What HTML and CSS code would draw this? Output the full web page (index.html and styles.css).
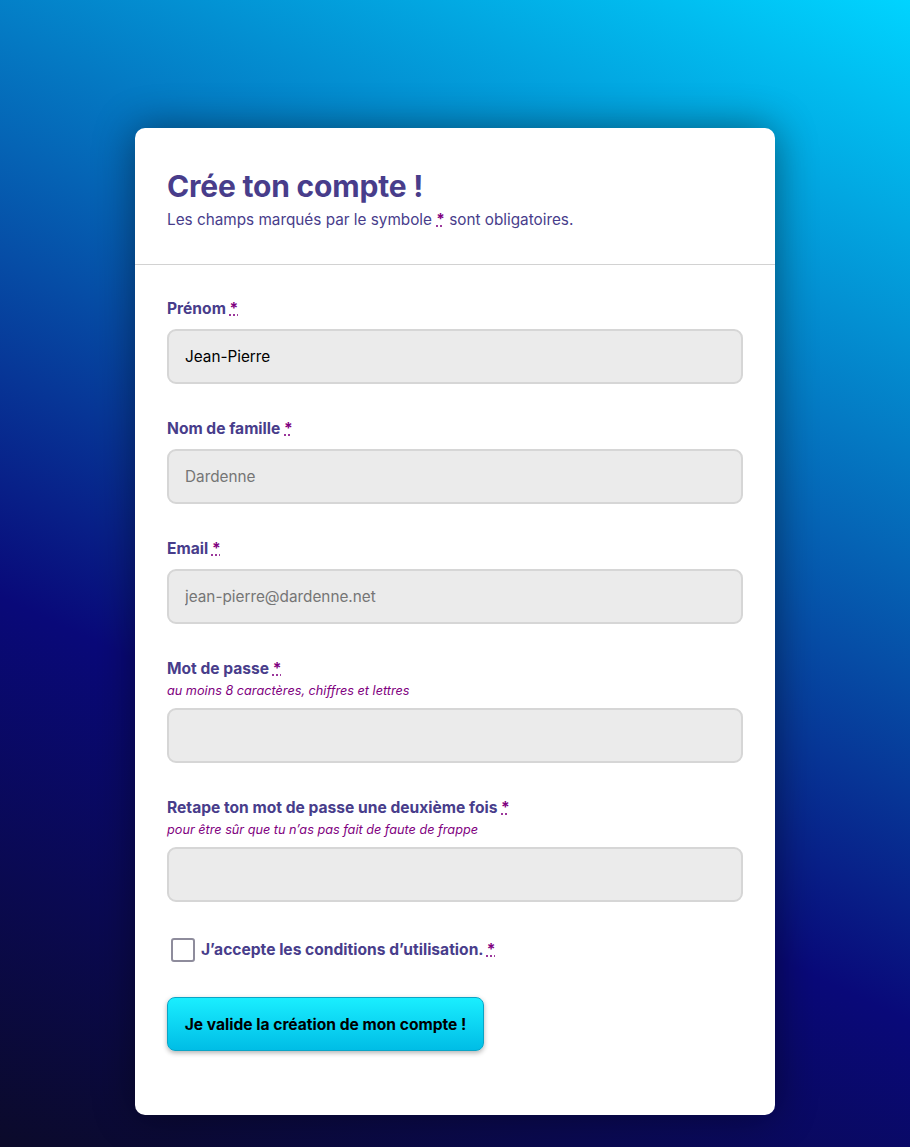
FILE: index.html
```html
<!DOCTYPE html>
<html lang="fr">
<head>
<meta charset="utf-8">
<title>Crée ton compte !</title>
<link rel="stylesheet" href="styles.css">
</head>
<body>
<main class="card">
  <header class="card-header">
    <h1 class="title">Crée ton compte !</h1>
    <p class="subtitle">Les champs marqués par le symbole <abbr class="req" title="obligatoire">*</abbr> sont obligatoires.</p>
  </header>
  <form class="card-body">
    <div class="field">
      <label class="label" for="prenom">Prénom <abbr class="req" title="obligatoire">*</abbr></label>
      <input class="input" id="prenom" type="text" value="Jean-Pierre">
    </div>
    <div class="field">
      <label class="label" for="nom">Nom de famille <abbr class="req" title="obligatoire">*</abbr></label>
      <input class="input" id="nom" type="text" placeholder="Dardenne">
    </div>
    <div class="field">
      <label class="label" for="email">Email <abbr class="req" title="obligatoire">*</abbr></label>
      <input class="input" id="email" type="email" placeholder="jean-pierre@dardenne.net">
    </div>
    <div class="field">
      <label class="label" for="mdp">Mot de passe <abbr class="req" title="obligatoire">*</abbr></label>
      <span class="hint">au moins 8 caractères, chiffres et lettres</span>
      <input class="input" id="mdp" type="password">
    </div>
    <div class="field">
      <label class="label" for="mdp2">Retape ton mot de passe une deuxième fois <abbr class="req" title="obligatoire">*</abbr></label>
      <span class="hint">pour être sûr que tu n’as pas fait de faute de frappe</span>
      <input class="input" id="mdp2" type="password">
    </div>
    <div class="check-row">
      <input class="checkbox" id="cgu" type="checkbox">
      <label class="label check-label" for="cgu">J’accepte les conditions d’utilisation. <abbr class="req" title="obligatoire">*</abbr></label>
    </div>
    <button class="submit" type="submit">Je valide la création de mon compte !</button>
  </form>
</main>
</body>
</html>
```

FILE: styles.css
```css
html {
  height: 100%;
  background: linear-gradient(25deg, #0b0a2a 0%, #090979 35%, #00d4ff 100%);
}

body {
  margin: 0;
  min-height: 100%;
  padding: 128px 0 32px;
  box-sizing: border-box;
  font-family: Inter, "Noto Sans", "Liberation Sans", sans-serif;
  color: #483d8b;
}

.card {
  width: 640px;
  margin: 0 auto;
  background: #fff;
  border-radius: 10px;
  box-shadow: 0 0 40px rgba(0, 0, 0, 0.45);
}

.card-header {
  padding: 40px 32px 32px;
  border-bottom: 1px solid #d2d2d2;
}

.title {
  margin: 0 0 4px;
  font-size: 30px;
  line-height: 36px;
  font-weight: 700;
  letter-spacing: -0.2px;
}

.subtitle {
  margin: 0;
  font-size: 15.3px;
  line-height: 24px;
}

.req {
  color: #800080;
  font-weight: 700;
  text-decoration: underline dotted;
  cursor: help;
}

.card-body {
  padding: 32px 32px 64px;
  display: flex;
  flex-direction: column;
}

.field {
  display: flex;
  flex-direction: column;
  margin-bottom: 33px;
}

.label {
  font-size: 15.6px;
  line-height: 24px;
  font-weight: 700;
  margin-bottom: 8px;
}

.hint {
  font-size: 12.7px;
  line-height: 19px;
  font-style: italic;
  color: #800080;
  margin-top: -8px;
  margin-bottom: 8px;
}

.input {
  box-sizing: border-box;
  width: 100%;
  height: 55px;
  padding: 0 16px;
  border: 2px solid #d6d6d6;
  border-radius: 9px;
  background: #ebebeb;
  font-family: Inter, "Noto Sans", "Liberation Sans", sans-serif;
  font-size: 15.3px;
  color: #000;
  outline: none;
}

.input::placeholder {
  color: #757575;
}

.check-row {
  display: flex;
  align-items: center;
  margin-top: 3px;
  margin-bottom: 35px;
}

.checkbox {
  appearance: none;
  -webkit-appearance: none;
  box-sizing: border-box;
  width: 24px;
  height: 24px;
  margin: 0 6px 0 4px;
  border: 2px solid #8e8c9c;
  border-radius: 3px;
  background: #fff;
}

.check-label {
  margin-bottom: 0;
}

.submit {
  align-self: flex-start;
  box-sizing: border-box;
  width: 317px;
  height: 54px;
  border: 1px solid #0aa5c6;
  border-radius: 8px;
  background: linear-gradient(to bottom, #1aeeff, #00bde6);
  box-shadow: 0 2px 5px rgba(0, 0, 0, 0.3);
  font-family: Inter, "Noto Sans", "Liberation Sans", sans-serif;
  font-size: 15.6px;
  font-weight: 700;
  color: #000;
  cursor: pointer;
}
```
